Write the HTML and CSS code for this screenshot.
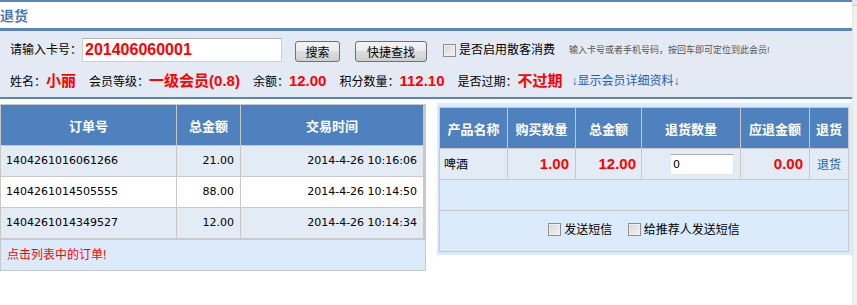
FILE: index.html
```html
<!DOCTYPE html>
<html lang="zh-CN">
<head>
    <meta charset="UTF-8">
    <meta name="viewport" content="width=device-width, initial-scale=1.0">
    <title>退货</title>
    <link rel="stylesheet" href="styles.css">
</head>
<body>
    <div class="page">
        <div class="title-bar">
            <h1>退货</h1>
        </div>
        <div class="search-box">
            <div class="search-row">
                <label class="field-label" for="card-no">请输入卡号：</label>
                <input type="text" id="card-no" class="card-input" value="201406060001">
                <button class="btn btn-search">搜索</button>
                <button class="btn btn-quick">快捷查找</button>
                <label class="check-label walk-in"><span class="check"></span>是否启用散客消费</label>
                <span class="hint">输入卡号或者手机号码，按回车即可定位到此会员!</span>
            </div>
            <div class="member-row">
                <span class="item">姓名：<b class="val">小丽</b></span>
                <span class="item">会员等级：<b class="val">一级会员(0.8)</b></span>
                <span class="item">余额：<b class="val">12.00</b></span>
                <span class="item">积分数量：<b class="val">112.10</b></span>
                <span class="item item-last">是否过期：<b class="val">不过期</b></span>
                <a href="#" class="detail-link">↓显示会员详细资料↓</a>
            </div>
        </div>
        <div class="content">
            <div class="orders">
                <table class="order-table">
                    <thead>
                        <tr>
                            <th class="col-no">订单号</th>
                            <th class="col-sum">总金额</th>
                            <th class="col-time">交易时间</th>
                        </tr>
                    </thead>
                    <tbody>
                        <tr class="odd">
                            <td>1404261016061266</td>
                            <td class="num">21.00</td>
                            <td class="num">2014-4-26 10:16:06</td>
                        </tr>
                        <tr>
                            <td>1404261014505555</td>
                            <td class="num">88.00</td>
                            <td class="num">2014-4-26 10:14:50</td>
                        </tr>
                        <tr class="odd last">
                            <td>1404261014349527</td>
                            <td class="num">12.00</td>
                            <td class="num">2014-4-26 10:14:34</td>
                        </tr>
                    </tbody>
                </table>
                <div class="order-tip">点击列表中的订单!</div>
            </div>
            <div class="return-panel">
                <table class="return-table">
                    <thead>
                        <tr>
                            <th class="c1">产品名称</th>
                            <th class="c2">购买数量</th>
                            <th class="c3">总金额</th>
                            <th class="c4">退货数量</th>
                            <th class="c5">应退金额</th>
                            <th class="c6">退货</th>
                        </tr>
                    </thead>
                    <tbody>
                        <tr class="item-row">
                            <td class="name">啤酒</td>
                            <td class="red-num">1.00</td>
                            <td class="red-num">12.00</td>
                            <td class="qty"><input type="text" class="qty-input" value="0"></td>
                            <td class="red-num">0.00</td>
                            <td class="act"><a href="#">退货</a></td>
                        </tr>
                        <tr class="blank-row">
                            <td colspan="6"></td>
                        </tr>
                        <tr class="sms-row">
                            <td colspan="6">
                                <label class="check-label"><span class="check"></span>发送短信</label>
                                <label class="check-label"><span class="check"></span>给推荐人发送短信</label>
                            </td>
                        </tr>
                    </tbody>
                </table>
            </div>
        </div>
    </div>
    <div class="scrollbar"><span class="scroll-up"></span></div>
</body>
</html>
```

FILE: styles.css
```css
body {
    margin: 0;
    min-height: 100vh;
    display: flex;
    font-family: "Liberation Sans", "Noto Sans CJK SC", sans-serif;
    font-size: 12px;
    color: #000;
    background: #fff;
}
.page {
    width: 852px;
}
.scrollbar {
    flex: 1;
    background: #f0f0f0;
    border-left: 1px solid #e4e4e4;
}
.scroll-up {
    display: block;
    height: 5px;
    border-bottom: 1px solid #c8c8c8;
    background: #e8e8e8;
}

/* title */
.title-bar {
    border-top: 2px solid #5b84bb;
    border-bottom: 3px solid #5b84bb;
    height: 26px;
}
.title-bar h1 {
    margin: 0;
    font-size: 14px;
    line-height: 26px;
    color: #4d78b4;
    font-family: "Noto Sans CJK SC", sans-serif;
}

/* search area */
.search-box {
    background: #e3eaf4;
    border-bottom: 2px solid #5b84bb;
    padding: 7px 0 5px 10px;
}
.search-row {
    display: flex;
    align-items: center;
    height: 24px;
}
.field-label {
    width: 72px;
    line-height: 16px;
}
.card-input {
    box-sizing: border-box;
    width: 200px;
    height: 24px;
    margin: 0;
    padding: 0 2px;
    border: 1px solid #cfcfcf;
    border-top-color: #b4b4b4;
    background: #fff;
    color: #f00;
    font-family: "Liberation Sans", sans-serif;
    font-size: 16px;
    font-weight: bold;
    outline: none;
}
.btn {
    box-sizing: border-box;
    height: 21px;
    margin: 3px 0 0 0;
    padding: 0;
    border: 1px solid #707070;
    border-radius: 3px;
    background: linear-gradient(#f3f3f3 0%, #ebebeb 50%, #dddddd 50%, #cfcfcf 100%);
    font-family: "Noto Sans CJK SC", sans-serif;
    font-size: 12px;
    line-height: 17px;
    color: #000;
}
.btn-search {
    width: 45px;
    margin-left: 13px;
}
.btn-quick {
    width: 72px;
    margin-left: 15px;
}
.check-label {
    display: inline-flex;
    align-items: center;
    line-height: 16px;
}
.check {
    box-sizing: border-box;
    width: 13px;
    height: 13px;
    margin-right: 3px;
    border: 1px solid #8e8e8e;
    background: linear-gradient(135deg, #d6d6d6, #f4f4f4);
    box-shadow: inset 0 0 0 1px #f0f0f0;
}
.walk-in {
    margin-left: 16px;
}
.hint {
    margin-left: 14px;
    font-size: 9px;
    color: #555;
    line-height: 12px;
}
.member-row {
    display: flex;
    align-items: center;
    height: 22px;
    margin-top: 8px;
    line-height: 18px;
}
.item {
    margin-right: 13px;
}
.item-last {
    margin-right: 9px;
}
.val {
    color: #f00;
    font-size: 15px;
    font-family: "Liberation Sans", "Noto Sans CJK SC", sans-serif;
}
.detail-link {
    color: #1e5eb4;
    text-decoration: none;
}

/* lower content */
.content {
    display: flex;
    align-items: flex-start;
    gap: 11px;
    margin-top: 4px;
}
.orders {
    width: 426px;
    margin-top: 1px;
}
table {
    border-spacing: 0;
    table-layout: fixed;
}
th, td {
    box-sizing: border-box;
    padding: 0;
}
th {
    background: #4e81bd;
    color: #fff;
    font-family: "Noto Sans CJK SC", sans-serif;
    font-size: 13px;
    font-weight: bold;
    text-align: center;
}

.order-table {
    width: 426px;
    border-top: 1px solid #c8c8c8;
    border-left: 1px solid #c8c8c8;
    border-right: 3px solid #c8c8c8;
    border-bottom: 1px solid #c8c8c8;
}
.order-table th {
    height: 41px;
    border-bottom: 1px solid #c8c8c8;
    border-right: 1px solid #c8c8c8;
}
.order-table .col-no { width: 176px; }
.order-table .col-sum { width: 64px; }
.order-table .col-time { border-right: none; }
.order-table td {
    height: 31px;
    padding: 0 6px 0 5px;
    border-bottom: 1px solid #c8c8c8;
    border-right: 1px solid #c8c8c8;
    font-family: "DejaVu Sans", sans-serif;
    font-size: 11px;
    line-height: 14px;
}
.order-table td:last-child {
    border-right: none;
}
.order-table tr.odd td {
    background: #e3ebf5;
}
.order-table .num {
    text-align: right;
}
.order-tip {
    box-sizing: border-box;
    height: 31px;
    padding-left: 6px;
    border: 1px solid #c8c8c8;
    border-top: none;
    background: #dcebfb;
    color: #f00;
    line-height: 30px;
}

.return-panel {
    width: 415px;
    box-sizing: border-box;
    padding: 4px 3px 3px 2px;
    background: #dcebfb;
}
.return-table {
    width: 410px;
    border: 1px solid #c8c8c8;
}
.return-table th {
    height: 41px;
    border-right: 1px solid #c8c8c8;
    border-bottom: 1px solid #c8c8c8;
}
.return-table .c1 { width: 68px; }
.return-table .c2 { width: 68px; }
.return-table .c3 { width: 66px; }
.return-table .c4 { width: 99px; }
.return-table .c5 { width: 69px; }
.return-table .c6 { border-right: none; }
.item-row td {
    height: 31px;
    background: #e3ebf5;
    border-right: 1px solid #c8c8c8;
    border-bottom: 1px solid #c8c8c8;
    padding: 0 6px 0 4px;
    line-height: 16px;
}
.item-row td:last-child {
    border-right: none;
}
.item-row .name {
    font-family: "Noto Sans CJK SC", sans-serif;
}
.red-num {
    text-align: right;
    color: #f00;
    font-size: 15px;
    font-weight: bold;
}
.return-table .item-row .red-num:nth-child(3) {
    padding-right: 5px;
}
.qty {
    text-align: right;
}
.qty-input {
    box-sizing: border-box;
    width: 64px;
    height: 21px;
    margin: 0;
    padding: 0 2px;
    border: 1px solid #e2e7ec;
    border-top-color: #abadb3;
    font-family: "DejaVu Sans", sans-serif;
    font-size: 11px;
    vertical-align: middle;
}
.act {
    text-align: center;
}
.item-row .act {
    padding: 0;
}
.act a {
    color: #1e5eb4;
    text-decoration: none;
    font-family: "Noto Sans CJK SC", sans-serif;
}
.blank-row td {
    height: 31px;
    border-bottom: 1px solid #c8c8c8;
}
.sms-row td {
    height: 40px;
    text-align: center;
    line-height: 16px;
}
.sms-row .check-label + .check-label {
    margin-left: 12px;
}
```
